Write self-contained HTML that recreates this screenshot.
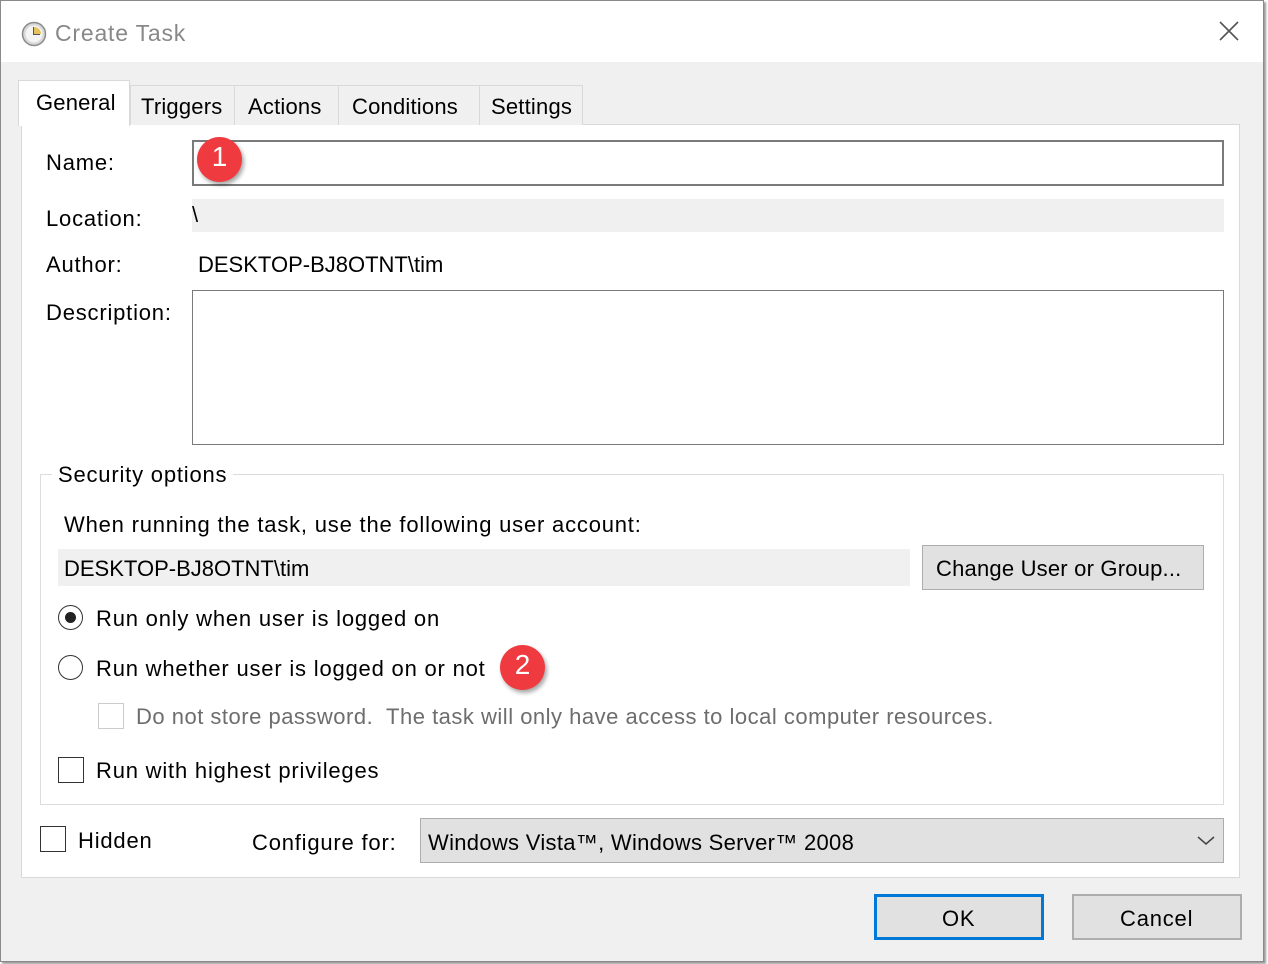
<!DOCTYPE html>
<html><head><style>
body{margin:0;width:1268px;height:964px;overflow:hidden;background:#fff;font-family:"Liberation Sans",sans-serif;font-size:22px;letter-spacing:0.8px;color:#000;position:relative}
.a{position:absolute;white-space:nowrap;margin-top:1px}
.box{position:absolute;box-sizing:border-box}
</style></head><body>
<div class="box" style="left:0;top:0;width:1264px;height:962px;border:1px solid #8a8a8a;background:#f0f0f0;box-shadow:2px 2px 2px #999"></div>
<div class="box" style="left:1px;top:1px;width:1262px;height:61px;background:#fff"></div>
<svg class="a" style="left:21px;top:20px" width="26" height="26" viewBox="0 0 26 26"><circle cx="13" cy="13" r="11.5" fill="#d8d8d8" stroke="#8a8a8a" stroke-width="1.5"/><circle cx="13" cy="13" r="8.5" fill="#f4f4f4"/><path d="M13 6v7h6" stroke="#555" stroke-width="2" fill="none"/><path d="M13 6a7 7 0 0 1 7 7h-7z" fill="#e6c25a"/></svg>
<div class="a" style="left:55px;top:19px;color:#888;font-size:23px">Create Task</div>
<svg class="a" style="left:1218px;top:19px" width="22" height="22"><path d="M2 2L20 20M20 2L2 20" stroke="#555" stroke-width="1.6"/></svg>
<div class="box" style="left:21px;top:124px;width:1219px;height:754px;background:#fff;border:1px solid #d9d9d9"></div>
<div class="box" style="left:130px;top:85px;width:453px;height:40px;background:#f0f0f0;border:1px solid #d9d9d9;border-bottom:none"></div>
<div class="box" style="left:234px;top:85px;width:1px;height:40px;background:#d9d9d9"></div>
<div class="box" style="left:338px;top:85px;width:1px;height:40px;background:#d9d9d9"></div>
<div class="box" style="left:479px;top:85px;width:1px;height:40px;background:#d9d9d9"></div>
<div class="box" style="left:18px;top:80px;width:112px;height:46px;background:#fff;border:1px solid #d9d9d9;border-bottom:none"></div>
<div class="a" style="left:36px;top:89px;letter-spacing:0.2px">General</div>
<div class="a" style="left:141px;top:93px;letter-spacing:0.2px">Triggers</div>
<div class="a" style="left:248px;top:93px;letter-spacing:0.2px">Actions</div>
<div class="a" style="left:352px;top:93px;letter-spacing:0.2px">Conditions</div>
<div class="a" style="left:491px;top:93px;letter-spacing:0.2px">Settings</div>
<div class="a" style="left:46px;top:149px">Name:</div>
<div class="box" style="left:192px;top:140px;width:1032px;height:46px;border:2px solid #7a7a7a;background:#fff"></div>
<div class="a" style="left:46px;top:205px">Location:</div>
<div class="box" style="left:192px;top:199px;width:1032px;height:33px;background:#f0f0f0"></div>
<div class="a" style="left:192px;top:201px">\</div>
<div class="a" style="left:46px;top:251px">Author:</div>
<div class="a" style="left:198px;top:251px;letter-spacing:0">DESKTOP-BJ8OTNT\tim</div>
<div class="a" style="left:46px;top:299px">Description:</div>
<div class="box" style="left:192px;top:290px;width:1032px;height:155px;border:1px solid #7a7a7a;background:#fff"></div>
<div class="box" style="left:40px;top:474px;width:1184px;height:331px;border:1px solid #dcdcdc"></div>
<div class="a" style="left:52px;top:461px;background:#fff;padding:0 6px">Security options</div>
<div class="a" style="left:64px;top:511px">When running the task, use the following user account:</div>
<div class="box" style="left:58px;top:549px;width:852px;height:37px;background:#f0f0f0"></div>
<div class="a" style="left:64px;top:555px;letter-spacing:0">DESKTOP-BJ8OTNT\tim</div>
<div class="box" style="left:922px;top:545px;width:282px;height:45px;background:#e1e1e1;border:1px solid #adadad"></div>
<div class="a" style="left:936px;top:555px;letter-spacing:0.2px">Change User or Group...</div>
<div class="box" style="left:58px;top:605px;width:25px;height:25px;border:1.5px solid #333;border-radius:50%;background:#fff"></div>
<div class="box" style="left:65px;top:612px;width:11px;height:11px;border-radius:50%;background:#222"></div>
<div class="a" style="left:96px;top:605px">Run only when user is logged on</div>
<div class="box" style="left:58px;top:655px;width:25px;height:25px;border:1.5px solid #333;border-radius:50%;background:#fff"></div>
<div class="a" style="left:96px;top:655px">Run whether user is logged on or not</div>
<div class="box" style="left:98px;top:703px;width:26px;height:26px;border:1.5px solid #ccc;background:#fff"></div>
<div class="a" style="left:136px;top:703px;color:#6d6d6d;letter-spacing:0.5px">Do not store password.&nbsp; The task will only have access to local computer resources.</div>
<div class="box" style="left:58px;top:757px;width:26px;height:26px;border:1.5px solid #333;background:#fff"></div>
<div class="a" style="left:96px;top:757px">Run with highest privileges</div>
<div class="box" style="left:40px;top:826px;width:26px;height:26px;border:1.5px solid #333;background:#fff"></div>
<div class="a" style="left:78px;top:827px">Hidden</div>
<div class="a" style="left:252px;top:829px">Configure for:</div>
<div class="box" style="left:420px;top:818px;width:804px;height:45px;background:#e1e1e1;border:1px solid #adadad"></div>
<div class="a" style="left:428px;top:829px;letter-spacing:0.3px">Windows Vista™, Windows Server™ 2008</div>
<svg class="a" style="left:1196px;top:834px" width="20" height="12"><path d="M2 2l8 7 8-7" stroke="#444" stroke-width="1.5" fill="none"/></svg>
<div class="box" style="left:874px;top:894px;width:170px;height:46px;background:#e1e1e1;border:3px solid #0078d7"></div>
<div class="a" style="left:942px;top:905px">OK</div>
<div class="box" style="left:1072px;top:894px;width:170px;height:46px;background:#e1e1e1;border:2px solid #adadad"></div>
<div class="a" style="left:1120px;top:905px">Cancel</div>
<div class="box" style="left:197px;top:137px;width:45px;height:45px;border-radius:50%;background:#ef3b40;box-shadow:2px 3px 4px rgba(0,0,0,.35)"></div>
<div class="a" style="left:197px;top:140px;width:45px;text-align:center;color:#fff;font-size:28px;letter-spacing:0">1</div>
<div class="box" style="left:500px;top:645px;width:45px;height:45px;border-radius:50%;background:#ef3b40;box-shadow:2px 3px 4px rgba(0,0,0,.35)"></div>
<div class="a" style="left:500px;top:648px;width:45px;text-align:center;color:#fff;font-size:28px;letter-spacing:0">2</div>
</body></html>
